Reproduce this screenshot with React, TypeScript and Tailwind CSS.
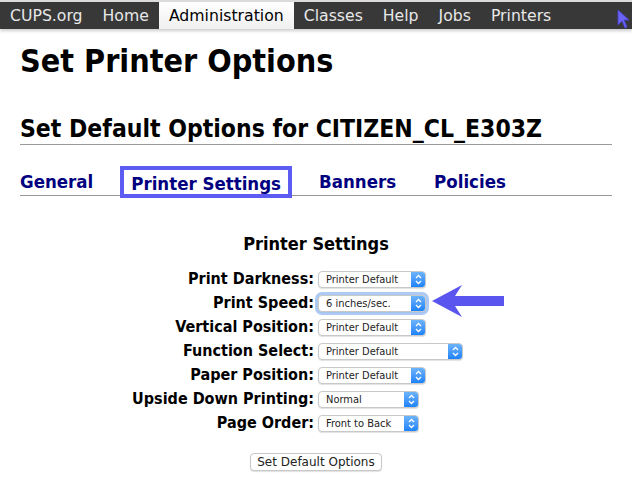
const navItems = ["CUPS.org", "Home", "Administration", "Classes", "Help", "Jobs", "Printers"];

const rows: { label: string; value: string; width: string; focused?: boolean }[] = [
  { label: "Print Darkness:", value: "Printer Default", width: "w-[108px]" },
  { label: "Print Speed:", value: "6 inches/sec.", width: "w-[108px]", focused: true },
  { label: "Vertical Position:", value: "Printer Default", width: "w-[108px]" },
  { label: "Function Select:", value: "Printer Default", width: "w-[145px]" },
  { label: "Paper Position:", value: "Printer Default", width: "w-[108px]" },
  { label: "Upside Down Printing:", value: "Normal", width: "w-[101px]" },
  { label: "Page Order:", value: "Front to Back", width: "w-[101px]" },
];

function PopUp({ value, width, focused }: { value: string; width: string; focused?: boolean }) {
  return (
    <div
      className={`flex h-[17px] ${width} items-stretch rounded-[4px] border border-[#c8c8c8] bg-white shadow-[0_1px_1px_rgba(0,0,0,0.12)] ${
        focused ? "ring-[3px] ring-[#8ab4f0]/70" : ""
      }`}
    >
      <span className="flex-1 truncate pl-[7px] text-[11px] leading-[15px] text-[#222]">{value}</span>
      <span className="flex w-[14px] items-center justify-center rounded-r-[3px] bg-gradient-to-b from-[#6cb3fa] to-[#1a82fb]">
        <svg width="7" height="11" viewBox="0 0 7 11" fill="none" stroke="white" strokeWidth="1.3">
          <path d="M1 4 L3.5 1.5 L6 4" />
          <path d="M1 7 L3.5 9.5 L6 7" />
        </svg>
      </span>
    </div>
  );
}

export default function App() {
  return (
    <div className="relative h-[492px] w-[632px] overflow-hidden bg-white font-['DejaVu_Sans',sans-serif] text-black">
      <div className="h-[2px] bg-[#dcdcdc]" />
      <nav className="flex h-[27px] items-stretch bg-[#383838] text-[15.7px] text-[#e8e8e8] shadow-[0_2px_3px_rgba(0,0,0,0.2)]">
        {navItems.map((item) => (
          <span
            key={item}
            className={`flex items-center px-[10px] pt-[1px] ${
              item === "Administration" ? "bg-gradient-to-b from-white to-[#f0f0f0] text-black" : ""
            }`}
          >
            {item}
          </span>
        ))}
      </nav>

      <main className="px-[20px] font-stretch-condensed">
        <h1 className="mt-[12px] text-[32px] font-bold leading-[40px]">Set Printer Options</h1>
        <h2 className="mt-[34px] border-b border-[#999] pb-[1px] text-[24.5px] font-bold leading-[28px]">
          Set Default Options for CITIZEN_CL_E303Z
        </h2>

        <div className="mt-[18px] flex items-end border-b border-[#999] text-[18.5px] font-bold text-[#000080]">
          <span className="pt-[7px] pb-[1px] leading-[24px]">General</span>
          <span className="relative z-10 mb-[-3px] ml-[27px] border-[4px] border-[#5c5cf2] bg-white px-[7px] pt-[3px] leading-[21px]">
            Printer Settings
          </span>
          <span className="ml-[27px] pt-[7px] pb-[1px] leading-[24px]">Banners</span>
          <span className="ml-[38px] pt-[7px] pb-[1px] leading-[24px]">Policies</span>
        </div>

        <h3 className="mt-[37px] text-center text-[18px] font-bold leading-[22px]">Printer Settings</h3>

        <div className="mt-[15px] grid grid-cols-2 gap-x-[4px] gap-y-[6px]">
          {rows.map((row) => (
            <div key={row.label} className="contents">
              <span className="text-right text-[16px] font-bold leading-[18px]">{row.label}</span>
              <div className="flex items-center">
                <PopUp value={row.value} width={row.width} focused={row.focused} />
              </div>
            </div>
          ))}
        </div>

        <div className="mt-[21px] flex justify-center font-stretch-normal">
          <button className="h-[18px] rounded-[4px] border border-[#c8c8c8] bg-white px-[6px] text-[12px] leading-[16px] text-[#222] shadow-[0_1px_1px_rgba(0,0,0,0.12)]">
            Set Default Options
          </button>
        </div>
      </main>

      <svg className="absolute left-[430px] top-[284px]" width="76" height="34" viewBox="0 0 76 34">
        <path d="M2 17 L32 1 L25 12 L74 12 L74 22 L25 22 L32 33 Z" fill="#5b55f0" />
      </svg>

      <svg className="absolute left-[617px] top-[9px]" width="14" height="20" viewBox="0 0 14 20">
        <path d="M1 1 L1 16 L5 12 L8 19 L10 18 L7 11 L12 11 Z" fill="#6a63f5" stroke="#4a44d8" strokeWidth="0.8" />
      </svg>
    </div>
  );
}
